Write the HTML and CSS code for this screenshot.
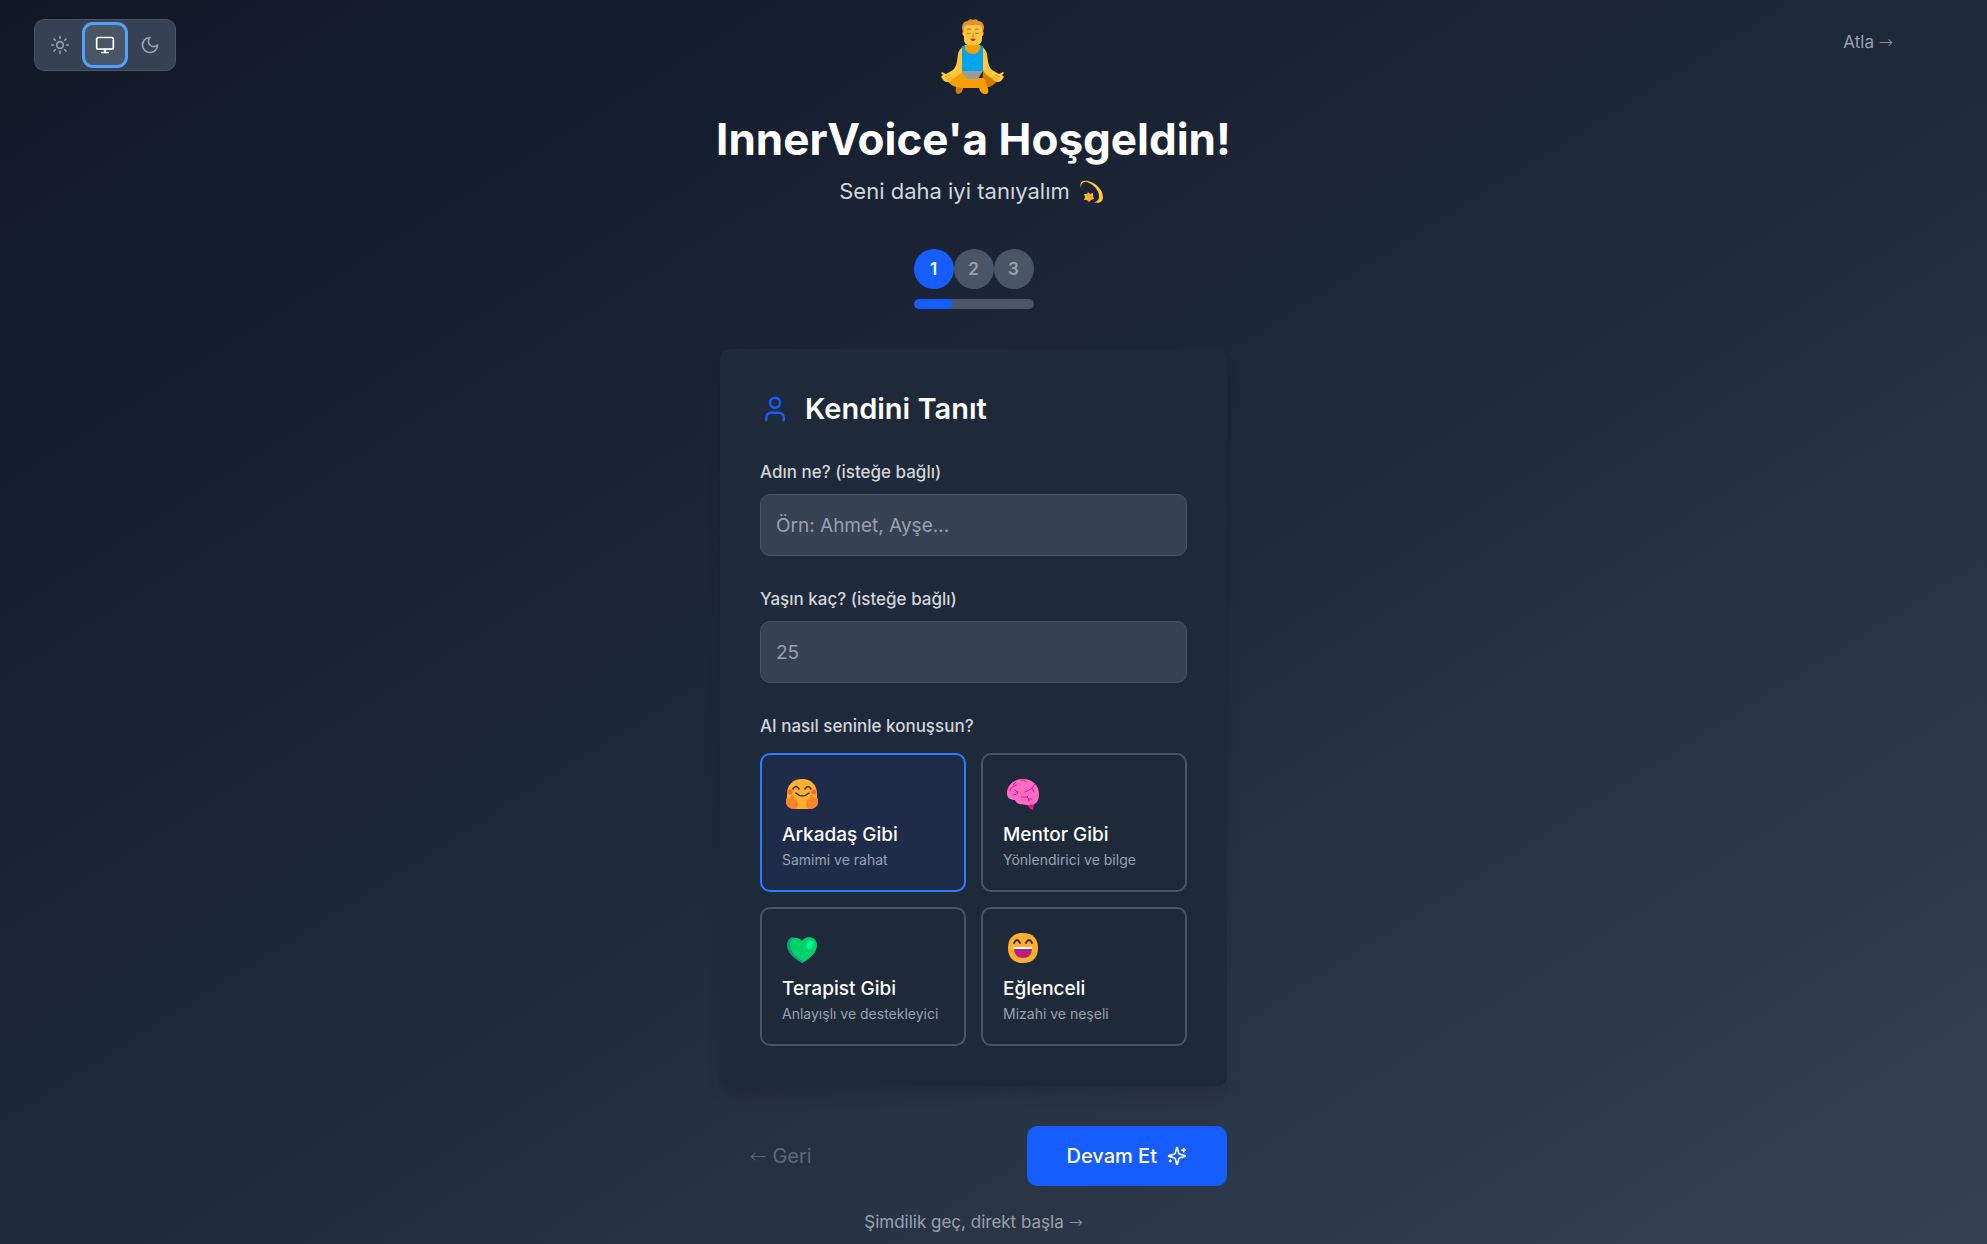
FILE: index.html
```html
<!DOCTYPE html>
<html lang="tr">
<head>
<meta charset="utf-8">
<meta name="viewport" content="width=device-width, initial-scale=1">
<title>InnerVoice</title>
<link rel="stylesheet" href="styles.css">
</head>
<body>
<div class="page">
  <div class="theme" role="group" aria-label="Tema">
    <button class="theme-btn" type="button" aria-label="Açık">
      <svg class="icon" viewBox="0 0 24 24"><circle cx="12" cy="12" r="4"/><path d="M12 2v2M12 20v2M4.93 4.93l1.41 1.41M17.66 17.66l1.41 1.41M2 12h2M20 12h2M6.34 17.66l-1.41 1.41M19.07 4.93l-1.41 1.41"/></svg>
    </button>
    <button class="theme-btn theme-btn-active" type="button" aria-label="Sistem">
      <svg class="icon" viewBox="0 0 24 24"><rect x="2" y="3" width="20" height="14" rx="2"/><path d="M8 21h8M12 17v4"/></svg>
    </button>
    <button class="theme-btn" type="button" aria-label="Koyu">
      <svg class="icon" viewBox="0 0 24 24"><path d="M12 3a6 6 0 0 0 9 9 9 9 0 1 1-9-9Z"/></svg>
    </button>
  </div>

  <main class="main">
    <header class="header">
      <svg class="hero" viewBox="0 0 64 75" aria-hidden="true">
        <path d="M42 51l15 8c-1 6-8 10-16 10z" fill="#D67D00"/>
        <path d="M15 68h7c0 4-2 7-5 7-2 0-3-3-2-7z" fill="#D67D00"/>
        <path d="M21 51L6 60c1 5 8 9 16 9h16c1 4 3 6 6 6 3 0 4-2 3-5l-3-9c0-1-1-2-3-2h-8z" fill="#F59F00"/>
        <path d="M28 26c-7 0-10 5-11 9-1 7-1 12-5 16l-7 4-4-2-1 1 2 2-2 2 3 4c3 2 6 1 8-2 5-3 9-5 11-9z" fill="#FFC83D"/>
        <path d="M35 26c7 0 10 5 11 9 1 7 1 12 5 16l7 4 4-2 1 1-2 2 2 2-3 4c-3 2-6 1-8-2-5-3-8-5-10-9z" fill="#FFC83D"/>
        <path d="M4 58l5-2M6 61l4-3M59 58l-5-2M57 61l-4-3" fill="none" stroke="#E89A00"/>
        <path d="M21 27c2 0 4-1 5-1h11l5 1v25H21z" fill="#00A6ED"/>
        <path d="M24 26h15v4c-1 3-4 5-7 5s-7-2-8-5z" fill="#F59F00"/>
        <path d="M21 52h21l-5 8H26z" fill="#9B9B9B"/>
        <path d="M23 7c0-3 3-4 9-4s9 1 9 4v5c2 0 2 5 0 5v3c0 4-3 6-5 6h-8c-3 0-5-2-5-6v-3c-2 0-2-5 0-5z" fill="#FFC83D"/>
        <path d="M21 9c0-4 2-7 6-7 1-2 4-2 5-1 2-1 4-1 5 1 4 0 6 3 6 7l-1 4-1-1V8c0-1-2-2-4-2h-9c-3 0-5 1-5 3v4l-1 1z" fill="#E6912C"/>
        <path d="M26 11q2-2 4 0M34 11q2-2 4 0" fill="none" stroke="#E27A3F" stroke-width="1.5"/>
        <path d="M26 14q2 1 4 0M34 14q2 1 4 0" fill="none" stroke="#B9782C"/>
        <path d="M32 12l1.5 6h-3z" fill="#F59F00"/>
        <path d="M29 20q3-1 6 0-3 4-6 0z" fill="#BB1D40"/>
      </svg>
      <h1 class="title">InnerVoice'a Hoşgeldin!</h1>
      <p class="subtitle">Seni daha iyi tanıyalım
        <svg class="dizzy" viewBox="0 0 24 24" aria-hidden="true"><path d="M1 8C-1 2 3 0 8 1c8 2 15 9 15 16 0 5-4 7-10 5 4 0 6-2 6-6C19 10 13 4 7 2 3 1 1 3 1 8z" fill="#FFC83D"/><path d="M8 12l2 2 3-1v3l1 3-3 1-2 2-2-2-3 0 1-3-1-3 3 0z" fill="#FFB02E"/></svg>
      </p>
    </header>

    <div class="progress">
      <ol class="steps">
        <li class="step step-active">1</li>
        <li class="step">2</li>
        <li class="step">3</li>
      </ol>
      <div class="bar"><div class="bar-fill" style="width:33%"></div></div>
    </div>

    <form class="form">
      <section class="card">
        <h2 class="card-title">
          <svg class="icon user" viewBox="0 0 24 24"><circle cx="12" cy="7" r="4"/><path d="M19 21v-2a4 4 0 0 0-4-4H9a4 4 0 0 0-4 4v2"/></svg>
          Kendini Tanıt
        </h2>
        <div class="field">
          <label class="label" for="name">Adın ne? (isteğe bağlı)</label>
          <input class="input" id="name" type="text" placeholder="Örn: Ahmet, Ayşe...">
        </div>
        <div class="field">
          <label class="label" for="age">Yaşın kaç? (isteğe bağlı)</label>
          <input class="input" id="age" type="text" inputmode="numeric" placeholder="25">
        </div>
        <div class="choice" role="group" aria-labelledby="style-label">
          <p class="label" id="style-label">AI nasıl seninle konuşsun?</p>
          <div class="options">
            <button class="option option-active" type="button">
              <svg class="emoji" viewBox="0 0 40 35" aria-hidden="true">
                <path d="M20 4c9 0 15 6 15 15v10c0 3-5 5-8 5H13c-3 0-8-2-8-5V19C5 10 11 4 20 4z" fill="#FFB02E"/>
                <circle cx="8" cy="17" r="2.5" fill="#FF6723"/><circle cx="32" cy="17" r="2.5" fill="#FF6723"/>
                <path d="M11 14q3-5 6 0M23 14q3-5 6 0M14 18q6 6 13 0" fill="none" stroke="#402A32" stroke-width="1.6" stroke-linecap="round"/>
                <path d="M10 20c2 0 2 3 2 4 3 0 4 3 4 5 0 3-1 5-4 5-4 0-8-3-8-6v-4l1-1 2 1c1-2 2-3 3-4zM30 20c-2 0-2 3-2 4-3 0-4 3-4 5 0 3 1 5 4 5 4 0 8-3 8-6v-4l-1-1-2 1c-1-2-2-3-3-4z" fill="#FF822D"/>
              </svg>
              <span class="option-title">Arkadaş Gibi</span>
              <span class="option-text">Samimi ve rahat</span>
            </button>
            <button class="option" type="button">
              <svg class="emoji" viewBox="0 0 40 35" aria-hidden="true">
                <path d="M24 29h7l-1 6c-3-1-5-3-6-6z" fill="#F70A8D"/>
                <path d="M20 4c10 0 16 7 16 15 0 7-3 11-9 11-5 0-14 0-15-5-5 0-8-2-8-7C4 10 11 4 20 4z" fill="#FF6DC6"/>
                <path d="M7 16c0-3 3-5 7-6M10 10l3-3M18 5q3-1 5 2M32 9l-3 4c-1 2-4 2-7 4M29 13l2 4M12 15l3 2-1 2-4 1M18 22h6l2 2h3M24 22l1-1M25 24l1 2" fill="none" stroke="#F70A8D" stroke-width="1" stroke-linecap="round" stroke-linejoin="round"/>
              </svg>
              <span class="option-title">Mentor Gibi</span>
              <span class="option-text">Yönlendirici ve bilge</span>
            </button>
            <button class="option" type="button">
              <svg class="emoji" viewBox="0 0 40 35" aria-hidden="true">
                <path d="M20 12c-3-5-13-5-13 4 0 7 7 13 13 18 7-4 15-10 15-18 0-9-12-10-15-4z" fill="#00D26A"/>
                <path d="M5 16c0 8 8 14 15 18l2-1C14 29 8 22 8 15c0-3 2-5 4-7-4 0-7 3-7 8z" fill="#129B7A"/>
                <ellipse cx="28" cy="16" rx="3" ry="5" transform="rotate(32 28 16)" fill="#00F397"/>
              </svg>
              <span class="option-title">Terapist Gibi</span>
              <span class="option-text">Anlayışlı ve destekleyici</span>
            </button>
            <button class="option" type="button">
              <svg class="emoji" viewBox="0 0 40 35" aria-hidden="true">
                <path d="M20 4c10 0 15 6 15 15s-5 15-15 15S5 28 5 19 10 4 20 4z" fill="#FFB02E"/>
                <path d="M11 14q3-6 6 0M23 14q3-6 6 0" fill="none" stroke="#402A32" stroke-width="1.8" stroke-linecap="round"/>
                <path d="M11 19h18c0 6-3 10-9 10s-9-4-9-10z" fill="#BB1D80"/>
                <path d="M10 18h19v2H11z" fill="#fff"/>
              </svg>
              <span class="option-title">Eğlenceli</span>
              <span class="option-text">Mizahi ve neşeli</span>
            </button>
          </div>
        </div>
      </section>

      <div class="nav">
        <button class="back" type="button" disabled><span class="arrow">←</span> Geri</button>
        <button class="next" type="button">Devam Et
          <svg class="icon" viewBox="0 0 24 24"><path d="M9.94 15.5A2 2 0 0 0 8.5 14.06l-6.14-1.58a.5.5 0 0 1 0-.96L8.5 9.94A2 2 0 0 0 9.94 8.5l1.58-6.14a.5.5 0 0 1 .96 0l1.58 6.14a2 2 0 0 0 1.44 1.44l6.14 1.58a.5.5 0 0 1 0 .96l-6.14 1.58a2 2 0 0 0-1.44 1.44l-1.58 6.14a.5.5 0 0 1-.96 0zM20 3v4M22 5h-4M4 17v2M5 18H3"/></svg>
        </button>
      </div>
    </form>
    <button class="skip" type="button">Şimdilik geç, direkt başla <span class="arrow">→</span></button>
  </main>

  <button class="skip skip-top" type="button">Atla <span class="arrow">→</span></button>
</div>
</body>
</html>
```
FILE: styles.css
```css
* { box-sizing: border-box; }

body {
  margin: 0;
  font-family: Inter, "Liberation Sans", sans-serif;
  font-size: 19px;
  line-height: 30px;
  color: #fff;
}

button, input { font: inherit; color: inherit; }
button { border: 0; padding: 0; background: none; cursor: pointer; }
h1, h2, p, ol { margin: 0; padding: 0; }

.page {
  min-height: 100vh;
  display: grid;
  grid-template-columns: 1fr minmax(0, 520px) 1fr;
  align-items: start;
  padding: 19px 74px 0 34px;
  background: linear-gradient(to bottom right in oklab, #101828, #1e2939, #364153);
}

.icon {
  width: 20px;
  height: 20px;
  flex: none;
  fill: none;
  stroke: currentColor;
  stroke-width: 2;
  stroke-linecap: round;
  stroke-linejoin: round;
}
.arrow { font-family: "DejaVu Sans", sans-serif; font-weight: 200; line-height: 1; }

.theme {
  justify-self: start;
  display: flex;
  gap: 5px;
  padding: 5px;
  border: 1px solid #4a5565;
  border-radius: 10px;
  background: #364153;
}
.theme-btn {
  display: grid;
  place-items: center;
  width: 40px;
  height: 40px;
  border-radius: 8px;
  color: #99a1af;
}
.theme-btn-active {
  background: #4a5565;
  color: #fff;
  box-shadow: 0 0 0 3px #51a2ff;
}

.main {
  display: flex;
  flex-direction: column;
  align-items: center;
}

.header {
  display: flex;
  flex-direction: column;
  align-items: center;
  white-space: nowrap;
}
.hero { width: 64px; height: 75px; margin-bottom: 20px; }
.title { font-size: 44px; line-height: 50px; font-weight: 700; }
.subtitle {
  display: flex;
  align-items: center;
  gap: 10px;
  margin-top: 10px;
  padding-right: 4px;
  font-size: 22px;
  line-height: 35px;
  color: #d1d5dc;
}
.dizzy { width: 24px; height: 24px; }

.progress { margin: 40px 0; }
.steps { display: flex; list-style: none; }
.step {
  width: 40px;
  height: 40px;
  border-radius: 50%;
  background: #4a5565;
  color: #99a1af;
  font-size: 17px;
  line-height: 41px;
  font-weight: 600;
  text-align: center;
}
.step-active { background: #155dfc; color: #fff; }
.bar {
  height: 10px;
  margin-top: 10px;
  border-radius: 5px;
  background: #4a5565;
  overflow: hidden;
}
.bar-fill { height: 100%; border-radius: 5px; background: #155dfc; }

.form { width: 100%; max-width: 507px; }
.card {
  padding: 40px;
  border-radius: 10px;
  background: #1e2939;
  box-shadow: 0 12px 18px -4px rgba(0, 0, 0, .1), 0 5px 8px -5px rgba(0, 0, 0, .1);
}
.card-title {
  display: flex;
  align-items: center;
  gap: 15px;
  margin-bottom: 30px;
  font-size: 29px;
  line-height: 40px;
  font-weight: 600;
}
.user { width: 30px; height: 30px; color: #155dfc; }

.field { margin-bottom: 30px; }
.label {
  display: block;
  margin-bottom: 8px;
  font-size: 17px;
  line-height: 27px;
  font-weight: 500;
  color: #d1d5dc;
}
.input {
  display: block;
  width: 100%;
  height: 62px;
  padding: 0 15px;
  border: 1px solid #4a5565;
  border-radius: 10px;
  background: #364153;
  outline: none;
}
.input::placeholder { color: #99a1af; opacity: 1; }

.choice .label { margin-bottom: 13px; }
.options {
  display: grid;
  grid-template-columns: repeat(2, minmax(0, 1fr));
  gap: 15px;
}
.option {
  display: flex;
  flex-direction: column;
  align-items: flex-start;
  padding: 20px;
  border: 2px solid #4a5565;
  border-radius: 10px;
  text-align: left;
  white-space: nowrap;
}
.option-active { border-color: #2b7fff; background: #1e2c4a; }
.emoji { width: 40px; height: 35px; margin-bottom: 10px; }
.option-title { font-weight: 500; }
.option-text { font-size: 14px; line-height: 20px; color: #99a1af; }

.nav {
  display: flex;
  justify-content: space-between;
  margin-top: 40px;
  font-size: 20px;
}
.back { padding: 15px 30px; color: #99a1af; opacity: .5; cursor: default; }
.next {
  display: flex;
  align-items: center;
  gap: 10px;
  padding: 15px 40px;
  border-radius: 10px;
  background: #155dfc;
  font-weight: 500;
}

.skip {
  margin-top: 24px;
  font-size: 17px;
  line-height: 25px;
  color: #99a1af;
}
.skip-top { justify-self: end; margin: 0; padding: 11px 20px; }
```
